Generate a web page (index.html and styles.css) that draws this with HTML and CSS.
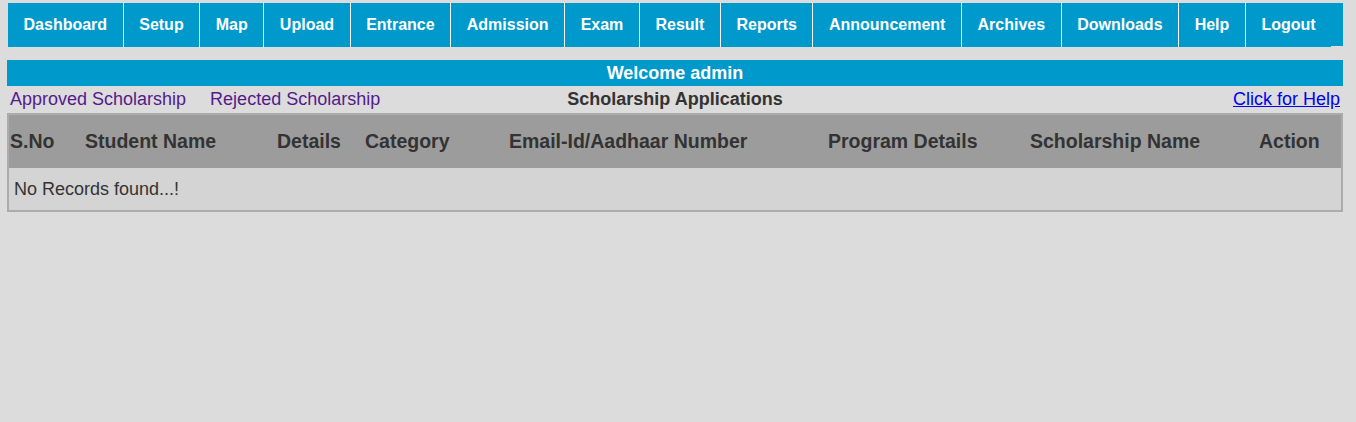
FILE: index.html
```html
<!DOCTYPE html>
<html lang="en">
<head>
<meta charset="utf-8">
<title>Scholarship Applications</title>
<link rel="stylesheet" href="styles.css">
</head>
<body>
<nav class="menu">
  <ul class="menu-list">
    <li class="menu-item"><a href="#">Dashboard</a></li>
    <li class="menu-item"><a href="#">Setup</a></li>
    <li class="menu-item"><a href="#">Map</a></li>
    <li class="menu-item"><a href="#">Upload</a></li>
    <li class="menu-item"><a href="#">Entrance</a></li>
    <li class="menu-item"><a href="#">Admission</a></li>
    <li class="menu-item"><a href="#">Exam</a></li>
    <li class="menu-item"><a href="#">Result</a></li>
    <li class="menu-item"><a href="#">Reports</a></li>
    <li class="menu-item"><a href="#">Announcement</a></li>
    <li class="menu-item"><a href="#">Archives</a></li>
    <li class="menu-item"><a href="#">Downloads</a></li>
    <li class="menu-item"><a href="#">Help</a></li>
    <li class="menu-item last"><a href="#">Logout</a></li>
  </ul>
</nav>

<div class="welcome">Welcome admin</div>

<div class="subbar">
  <div class="sublinks">
    <a class="visited" href="#">Approved Scholarship</a>
    <a class="visited" href="#">Rejected Scholarship</a>
  </div>
  <div class="subtitle">Scholarship Applications</div>
  <div class="helplink"><a href="#">Click for Help</a></div>
</div>

<table class="grid">
  <colgroup>
    <col class="c-sno">
    <col class="c-name">
    <col class="c-details">
    <col class="c-cat">
    <col class="c-email">
    <col class="c-prog">
    <col class="c-schol">
    <col class="c-action">
  </colgroup>
  <thead>
    <tr class="head-row">
      <th>S.No</th>
      <th>Student Name</th>
      <th>Details</th>
      <th>Category</th>
      <th>Email-Id/Aadhaar Number</th>
      <th>Program Details</th>
      <th>Scholarship Name</th>
      <th>Action</th>
    </tr>
  </thead>
  <tbody>
    <tr class="body-row">
      <td colspan="8">No Records found...!</td>
    </tr>
  </tbody>
</table>
</body>
</html>
```

FILE: styles.css
```css
html, body {
  margin: 0;
  padding: 0;
}

body {
  background: #dcdcdc;
  font-family: "Liberation Sans", Arial, sans-serif;
  color: #333333;
  padding: 3px 13px 0 7px;
  min-height: 422px;
  box-sizing: border-box;
}

.menu {
  margin-left: 1px;
  background: #0099cc;
  height: 43px;
}

.menu-list {
  list-style: none;
  margin: 0;
  padding: 0;
  display: flex;
}

.menu-item {
  border-right: 1px solid #ffffff;
  height: 44px;
  background: #0099cc;
}

.menu-item.last {
  border-right: none;
}

.menu-item a {
  display: block;
  padding: 0 15.55px;
  line-height: 44px;
  color: #ffffff;
  font-weight: bold;
  font-size: 16px;
  text-decoration: none;
}

.welcome {
  margin-top: 14px;
  background: #0099cc;
  color: #ffffff;
  font-weight: bold;
  font-size: 18px;
  text-align: center;
  height: 26px;
  line-height: 26px;
}

.subbar {
  display: grid;
  grid-template-columns: 1fr auto 1fr;
  align-items: center;
  height: 27px;
  font-size: 18px;
  padding: 0 3px;
}

.sublinks {
  display: flex;
  gap: 24px;
}

.sublinks a {
  color: #551a8b;
  text-decoration: none;
}

.subtitle {
  font-weight: bold;
  color: #333333;
}

.helplink {
  text-align: right;
}

.helplink a {
  color: #0000ee;
  text-decoration: underline;
}

.grid {
  width: 1336px;
  table-layout: fixed;
  border-collapse: separate;
  border-spacing: 0;
  border: 2px solid #acacac;
  background: #d4d4d4;
}

.c-sno { width: 75px; }
.c-name { width: 192px; }
.c-details { width: 88px; }
.c-cat { width: 144px; }
.c-email { width: 319px; }
.c-prog { width: 202px; }
.c-schol { width: 229px; }
.c-action { width: 83px; }

.head-row {
  background: #9c9c9c;
}

.head-row th {
  height: 53px;
  padding: 0 0 0 1px;
  text-align: left;
  font-size: 19.5px;
  font-weight: bold;
  color: #333333;
  white-space: nowrap;
}

.body-row td {
  height: 42px;
  padding: 0 0 0 5px;
  font-size: 18px;
  color: #333333;
}
```
